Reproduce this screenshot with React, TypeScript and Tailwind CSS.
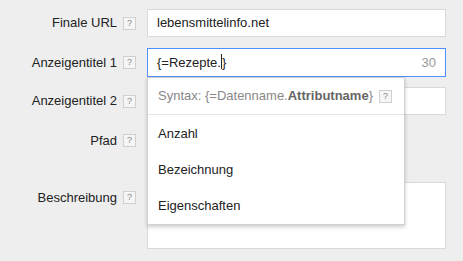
import React from 'react';

function Help() {
    return (
        <span className="inline-flex h-[13px] w-[13px] items-center justify-center border border-[#d0d0d0] bg-[#f5f5f5] text-[9px] leading-none text-[#888]">
            ?
        </span>
    );
}

function Label({ text }: { text: string }) {
    return (
        <div className="flex w-[147px] shrink-0 items-center justify-end gap-[6px] pr-[11px] text-[13px] text-[#222]">
            <span>{text}</span>
            <Help />
        </div>
    );
}

export default function App() {
    const items = ['Anzahl', 'Bezeichnung', 'Eigenschaften'];

    return (
        <div className="relative h-[261px] w-[463px] overflow-hidden bg-[#eeeeee] font-['Liberation_Sans',Arial,sans-serif]">
            <div className="flex flex-col pt-[9px]">
                {/* Finale URL */}
                <div className="flex h-[28px] items-center">
                    <Label text="Finale URL" />
                    <div className="flex h-full w-[299px] items-center border border-[#d9d9d9] bg-white px-[9px] text-[13px] text-[#222]">
                        lebensmittelinfo.net
                    </div>
                </div>

                {/* Anzeigentitel 1 */}
                <div className="relative mt-[11px] flex h-[29px] items-center">
                    <Label text="Anzeigentitel 1" />
                    <div className="flex h-full w-[299px] items-center justify-between border border-[#4d90fe] bg-white px-[9px] text-[13px] text-[#222]">
                        <span>
                            {'{=Rezepte.'}
                            <span className="inline-block h-[15px] w-px translate-y-[2px] bg-[#222]" />
                            {'}'}
                        </span>
                        <span className="text-[#999]">30</span>
                    </div>

                    {/* Dropdown */}
                    <div className="absolute left-[147px] top-[29px] z-10 w-[258px] border border-[#d0d0d0] bg-white shadow-[0_2px_4px_rgba(0,0,0,0.2)]">
                        <div className="flex h-[37px] items-center gap-[6px] border-b border-[#e5e5e5] px-[10px] text-[13px] text-[#888]">
                            <span>
                                {'Syntax: {=Datenname.'}
                                <b className="text-[#666]">Attributname</b>
                                {'}'}
                            </span>
                            <Help />
                        </div>
                        <div className="pt-[1px]">
                            {items.map((item) => (
                                <div key={item} className="flex h-[36px] items-center px-[10px] text-[13px] text-[#222]">
                                    {item}
                                </div>
                            ))}
                        </div>
                    </div>
                </div>

                {/* Anzeigentitel 2 */}
                <div className="mt-[10px] flex h-[28px] items-center">
                    <Label text="Anzeigentitel 2" />
                    <div className="h-full w-[299px] border border-[#d9d9d9] bg-white" />
                </div>

                {/* Pfad */}
                <div className="mt-[11px] flex h-[29px] items-center">
                    <Label text="Pfad" />
                </div>

                {/* Beschreibung */}
                <div className="mt-[27px] flex items-start">
                    <div className="pt-[6px]">
                        <Label text="Beschreibung" />
                    </div>
                    <div className="h-[67px] w-[299px] border border-[#d9d9d9] bg-white" />
                </div>
            </div>
        </div>
    );
}
